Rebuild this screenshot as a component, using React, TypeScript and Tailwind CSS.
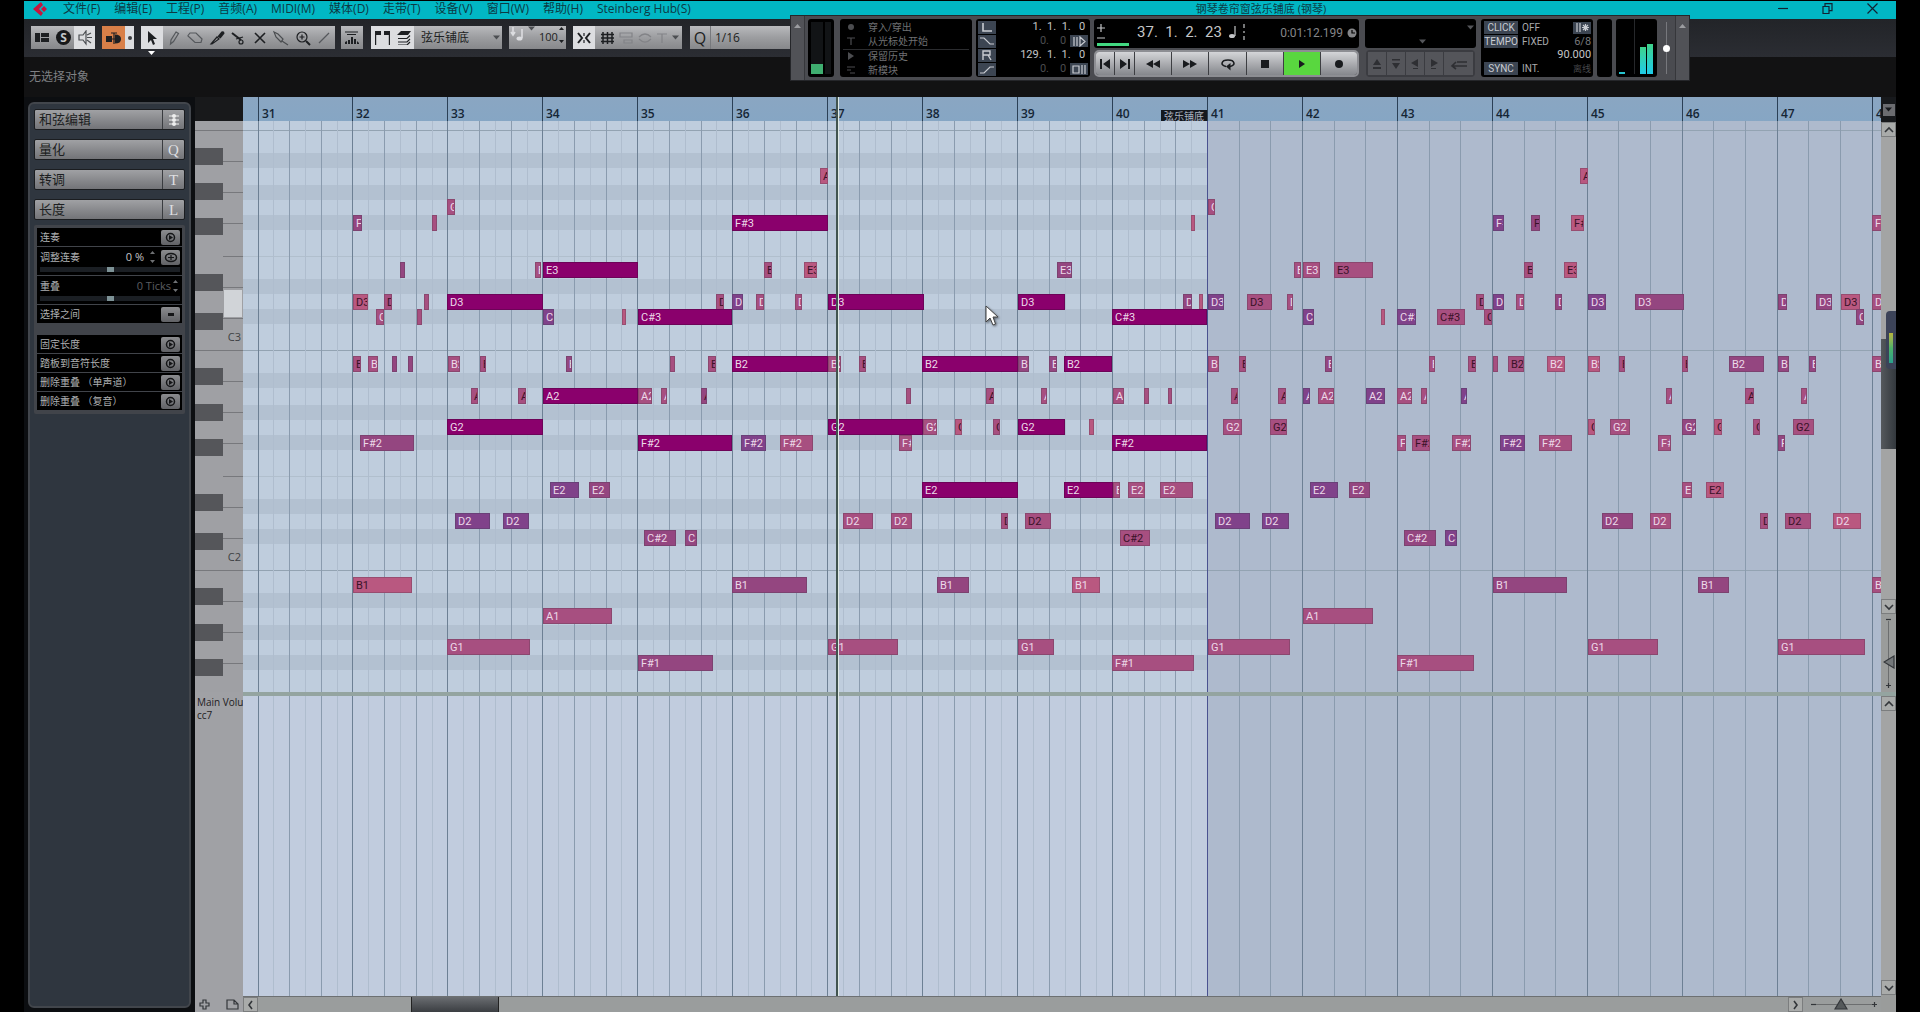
import React from "react";
import clsx from "clsx";

const CJK = "font-['Open_Sans','Noto_Sans_CJK_SC',sans-serif]";

/* ---------- shared helpers ---------- */

function Icon({ w = 16, h = 16, children, className }: { w?: number; h?: number; children: React.ReactNode; className?: string }) {
  return (
    <svg width={w} height={h} viewBox={`0 0 ${w} ${h}`} fill="none" stroke="currentColor" strokeWidth={1.2} className={clsx("shrink-0", className)} aria-hidden="true">
      {children}
    </svg>
  );
}

const solid = { fill: "currentColor", stroke: "none" };

/* ---------- title bar ---------- */

const menus = ["文件(F)", "编辑(E)", "工程(P)", "音频(A)", "MIDI(M)", "媒体(D)", "走带(T)", "设备(V)", "窗口(W)", "帮助(H)", "Steinberg Hub(S)"];

function TitleBar() {
  return (
    <header className="relative flex h-[18px] shrink-0 items-center bg-[#01b7c4] pb-0.5 text-[12px] leading-4 text-[#0c3a44]">
      <Icon w={16} h={14} className="ml-2 text-[#c8143c]">
        <path {...solid} d="M1 7 9 0l2 3-4 4 4 4-2 3zM9 7l3-3 3 3-3 3z" />
      </Icon>
      <nav className="ml-[15px] flex gap-[14px]">
        {menus.map((m) => (
          <button key={m} className="whitespace-nowrap">{m}</button>
        ))}
      </nav>
      <h1 className="absolute left-[62.6%] whitespace-nowrap text-[11px]">钢琴卷帘窗弦乐铺底 (钢琴)</h1>
      <div className="ml-auto flex items-center gap-[34px] pr-[18px] pb-0.5 text-[#123]">
        <button aria-label="最小化"><Icon w={10} h={10}><path d="M0 5.500h10" /></Icon></button>
        <button aria-label="还原"><Icon w={11} h={11}><path d="M1 3.500h6v7H1zM3 3V.6h7v7H7.500" /></Icon></button>
        <button aria-label="关闭"><Icon w={11} h={11}><path d="m.5.5 10 10m0-10-10 10" /></Icon></button>
      </div>
    </header>
  );
}

/* ---------- toolbar ---------- */

function Group({ className, children }: { className?: string; children: React.ReactNode }) {
  return (
    <div className={clsx("flex h-[23px] shrink-0 items-stretch bg-linear-to-b from-[#b9babd] via-[#9c9da0] to-[#87888b] text-[#1d1f22]", className)}>
      {children}
    </div>
  );
}

function Tool({ label, active, className, children }: { label: string; active?: boolean; className?: string; children: React.ReactNode }) {
  return (
    <button aria-label={label} className={clsx("flex items-center justify-center", active && "bg-[#dcdde0]", className)}>
      {children}
    </button>
  );
}

const drawTools: { label: string; icon: React.ReactNode }[] = [
  { label: "铅笔", icon: <path d="m4.500 14 .5-4 5-8 2.500 1.500-5 8zM10 2l2.500 1.500" stroke="#55585c" /> },
  { label: "橡皮", icon: <path d="M1 5.500 3 3h6l6 6-1 3.500H8L1 6z" stroke="#55585c" /> },
  { label: "修剪", icon: <><path d="M2 14 8 7l2 2-7 5z" /><path {...solid} d="m8.500 6.500 4-5q3-1 3 2l-4 5z" /></> },
  { label: "剪刀", icon: <><path d="m2 3 9 7" strokeWidth={2} /><path d="M13 7 6 9" /><circle cx="11" cy="12" r="2" /></> },
  { label: "静音", icon: <path d="m3 3 10 10M13 3 3 13" strokeWidth={1.600} /> },
  { label: "胶水", icon: <path d="m1 2 4 2 5 5-2 3-5-5zM9 11l6 4" stroke="#4a4d50" /> },
  { label: "缩放", icon: <><circle cx="7" cy="7" r="5" /><path d="M4.500 7h5M7 4.500v5" /><path d="m11 11 4 4" strokeWidth={2} /></> },
  { label: "画线", icon: <path d="M3 13 13 3" stroke="#55585c" /> },
];

function Caret({ className }: { className?: string }) {
  return <Icon w={7} h={5} className={className}><path {...solid} d="M0 .5h7L3.500 4.500z" /></Icon>;
}

function Toolbar() {
  return (
    <div className="flex h-[38px] shrink-0 items-start bg-linear-to-b from-[#222428] to-[#2b2d33] pt-[7px] pl-[7px]">
      <Group className="w-16">
        <Tool label="窗口布局" className="w-[22px]"><Icon w={14} h={10}><path {...solid} d="M0 0h5v9H0zM6 0h8v4H6zM6 5h8v4H6z" /></Icon></Tool>
        <Tool label="独奏" className="w-[21px]"><span className="flex size-[15px] items-center justify-center rounded-full bg-[#17181a] text-[12px] font-bold leading-none text-[#c5c6c8]">S</span></Tool>
        <Tool label="监听" active className="flex-1"><Icon><path d="M2 5h4l3-4v13L6 10H2zM10 5l4-2M10 7.500h5M10 10l4 3" stroke="#4b4e52" /></Icon></Tool>
      </Group>
      <Group className="ml-[7px] w-8">
        <Tool label="自动滚动" className="w-[23px] bg-[#d87f48]"><Icon w={18} h={14}><path {...solid} d="M1 5h6v6H1zM10 3.500q6 0 6 4.500t-6 4.500z" /><path d="M6 2h6M9 2v11M7 8h5" /></Icon></Tool>
        <Tool label="滚动设置" active className="flex-1"><span className="size-1 rounded-full bg-[#3b3d40]" /></Tool>
      </Group>
      <Group className="ml-[7px] w-[194px]">
        <div className="relative flex w-[22px]">
          <Tool label="对象选择" active className="flex-1"><Icon w={12} h={16}><path {...solid} d="M2 1v12l3-3 2 5 2-1-2-5h4z" /></Icon></Tool>
          <Icon w={7} h={4} className="absolute top-[25px] left-[7px] text-white"><path {...solid} d="M0 0h7L3.500 4z" /></Icon>
        </div>
        {drawTools.map((t) => <Tool key={t.label} label={t.label} className="flex-1"><Icon>{t.icon}</Icon></Tool>)}
      </Group>
      <Group className="ml-1.5 w-[22px]">
        <Tool label="显示力度" className="flex-1"><Icon><path d="M1 2h13M3 4.500h9" /><path {...solid} d="M1 14v-2l2-1v3zM4 14v-4h2v4zM7 14V7h2v7zM10 14v-5h2v5zM13 14v-3l2 2v1z" /></Icon></Tool>
      </Group>
      <Group className="ml-2 w-[131px]">
        <Tool label="显示片段边界" active className="w-[22px]"><Icon w={15} h={14}><path {...solid} d="M0 0h6v4H0zM9 0h6v4H9z" /><path d="M.6 0v14M14.400 0v14" /></Icon></Tool>
        <Tool label="仅编辑当前片段" active className="w-[21px]"><Icon w={14} h={14}><path {...solid} d="M4 0h10l-3 4H0z" /><path d="m1 7.500h9l3-3M1 11h9l3-3M1 14h9l3-3" /></Icon></Tool>
        <div className="relative flex flex-1 items-center">
          <select aria-label="当前片段" className="w-full appearance-none bg-transparent pl-[7px] text-[12px] outline-none"><option>弦乐铺底</option></select>
          <Caret className="pointer-events-none absolute right-0.5 text-[#4c4e52]" />
        </div>
      </Group>
      <Group className="ml-[7px] w-[57px] items-center">
        <Icon w={14} h={16} className="ml-px text-[#dcdde0]"><path d="M3 1v7M1 6l2 3 2-3M12 3v9" strokeWidth={1.600} /><ellipse {...solid} cx="9.500" cy="12.500" rx="3" ry="2" /></Icon>
        <Caret className="ml-1 text-[#4c4e52]" />
        <input aria-label="插入力度" defaultValue="100" className="ml-1 w-5 bg-transparent text-[11px] outline-none" />
        <Icon w={6} h={18}><path {...solid} d="M0 4h5L2.500 1zM0 14h5l-2.500 3z" /></Icon>
      </Group>
      <Group className="ml-[7px] w-[109px]">
        <Tool label="吸附" active className="w-[22px]"><Icon w={14} h={12}><path d="m1 1 4 5-4 5M13 1 9 6l4 5" strokeWidth={2} /><path d="M7 1v3M7 8v3" /></Icon></Tool>
        <Tool label="吸附类型" className="w-6"><Icon w={14} h={12}><path d="M1 2.500h13M1 6h13M1 9.500h13M3 0v12M7.500 0v12M12 0v12" strokeWidth={1.500} /></Icon></Tool>
        <div className="flex flex-1 items-center justify-between pr-[3px] text-[#828387]">
          <Icon w={14} h={12}><path d="M1 1h12v4H1zM5 8h8v3H5z" /></Icon>
          <Icon w={14} h={12}><path d="M1 5q6-6 12 0M13 7q-6 6-12 0" /></Icon>
          <Icon w={10} h={12}><path d="M0 2h10M5 2v9" /></Icon>
          <Caret className="text-[#4c4e52]" />
        </div>
      </Group>
      <Group className="ml-2 w-40">
        <Tool label="量化" className="w-[21px] border-r border-[#77797d] text-[16px]">Q</Tool>
        <select aria-label="量化预设" className="flex-1 appearance-none bg-transparent pl-1 text-[12px] outline-none"><option>1/16</option></select>
      </Group>
    </div>
  );
}

/* ---------- floating transport panel ---------- */

const screen = "rounded-[3px] bg-black";

function Glyph({ children }: { children: React.ReactNode }) {
  return <Icon w={14} h={11} className="text-[#c9ccd2]">{children}</Icon>;
}

function LocatorRow({ label, icon, value, dim, tail }: { label: string; icon: React.ReactNode; value: string; dim?: boolean; tail?: React.ReactNode }) {
  return (
    <div className="flex h-[14px] items-center">
      <button aria-label={label} className="flex h-[13px] w-[18px] items-center justify-center bg-[#3c4552]"><Glyph>{icon}</Glyph></button>
      <span className={clsx("ml-auto whitespace-pre font-['Roboto',sans-serif] text-[11px]", dim ? "text-[#4c4d50]" : "text-[#c4c5c7]")}>{value}</span>
      {tail ? <button aria-label={`${label}开关`} className="ml-1 flex h-3 w-[18px] items-center justify-center bg-[#3c4552]"><Glyph>{tail}</Glyph></button> : <span className="w-[3px]" />}
    </div>
  );
}

const transportButtons: { label: string; w: string; on?: boolean; icon: React.ReactNode }[] = [
  { label: "上一标记", w: "w-[18px]", icon: <path {...solid} d="M2 2h2v10H2zM12 2v10L5 7z" /> },
  { label: "下一标记", w: "w-[19px]", icon: <path {...solid} d="M2 2v10l7-5zM10 2h2v10h-2z" /> },
  { label: "快退", w: "flex-1", icon: <path {...solid} d="M7 3v8L0 7zM14 3v8L7 7z" /> },
  { label: "快进", w: "flex-1", icon: <path {...solid} d="M0 3v8l7-4zM7 3v8l7-4z" /> },
  { label: "循环", w: "flex-1", icon: <><path d="M5 9.500C-1 8.500 0 3 7 3s8 5.500 2 6.500" strokeWidth={1.600} /><path {...solid} d="M9.500 6v7.500L5 9.500z" /></> },
  { label: "停止", w: "flex-1", icon: <path {...solid} d="M3 3h8v8H3z" /> },
  { label: "播放", w: "flex-1", on: true, icon: <path {...solid} d="M4 3v8l6-4z" /> },
  { label: "录音", w: "flex-1", icon: <circle {...solid} cx="7" cy="7" r="4" /> },
];

const punchRows: { label: string; icon: React.ReactNode }[] = [
  { label: "穿入/穿出", icon: <circle {...solid} cx="5" cy="5" r="3" /> },
  { label: "从光标处开始", icon: <path d="M1 2h8M5 2v7" /> },
  { label: "保留历史", icon: <path {...solid} d="M2 1v8l6-4z" /> },
  { label: "新模块", icon: <path d="M1 2h8M1 5h4M4 8h5" /> },
];

function Tag({ children }: { children: React.ReactNode }) {
  return <span className="flex h-[13px] w-[34px] items-center justify-center bg-[#3c4552] text-[#c9ccd2]">{children}</span>;
}

function Transport() {
  return (
    <section aria-label="走带控制" className="absolute top-[15px] left-[41.150%] flex h-[66px] w-[900px] border border-[#25262a] bg-[#4a4b50] py-[3px]">
      <button aria-label="折叠左侧" className="-my-[3px] flex w-[14px] justify-center border-r border-[#36373b] bg-[#515257] pt-2 text-[#9b9ca0]">
        <Icon w={7} h={4}><path {...solid} d="M0 4h7L3.500 0z" /></Icon>
      </button>
      <div className={clsx(screen, "ml-[3px] flex w-[26px] items-end gap-0.5 p-[3px]")}>
        <div className="flex h-full w-3 items-end bg-[#121416]"><div className="h-[10px] w-full bg-[#3fae70]" /></div>
        <div className="h-full flex-1 bg-[#121416]" />
      </div>
      <div className={clsx(screen, "ml-1.5 flex w-[132px] flex-col justify-between px-[3px] pt-px text-[10px] leading-[14px] text-[#6f7073]")}>
        {punchRows.map((r, i) => (
          <button key={r.label} className={clsx("flex h-[14px] items-center", i === 2 && "border-t border-[#2b2c2f]")}>
            <Icon w={10} h={10} className="ml-[3px] text-[#4c4d50]">{r.icon}</Icon>
            <span className="ml-3">{r.label}</span>
          </button>
        ))}
      </div>
      <div className={clsx(screen, "ml-1 flex w-[114px] flex-col justify-between px-0.5 py-px")}>
        <LocatorRow label="左定位" icon={<path d="M3 1v8h9" strokeWidth={1.600} />} value="1.  1.  1.   0" />
        <LocatorRow label="穿入" icon={<path d="M0 2h4l6 6h4" />} value="0.    0" dim tail={<path d="M2 1v9M5 1v9M8 1l5 4.500L8 10z" />} />
        <LocatorRow label="右定位" icon={<path d="M3 10V1h7v4H3m5 0 3 5" strokeWidth={1.400} />} value="129.  1.  1.   0" />
        <LocatorRow label="穿出" icon={<path d="M0 9h4l6-6h4" />} value="0.    0" dim tail={<path d="M1 2h6v7H1zM10 1v9M13 1v9" />} />
      </div>
      <div className="ml-1 flex w-[265px] flex-col justify-between">
        <div className={clsx(screen, "flex h-[29px] items-center text-[#c4c5c7]")}>
          <div className="ml-[3px] w-8">
            <Icon w={32} h={26}><path d="M0 7h8M4 3v8M0 17h8" /><path d="M0 22h32v3H0z" fill="#42d982" stroke="none" /></Icon>
          </div>
          <span className="ml-2 pb-1 whitespace-pre font-['Roboto',sans-serif] text-[15px] leading-5">37.  1.  2.  23</span>
          <Icon w={20} h={18} className="mb-1 ml-1.5"><ellipse {...solid} cx="4" cy="13" rx="3" ry="2" /><path d="M7 13V3M16 1v4M16 8v2M16 13v4" /></Icon>
          <time className="ml-auto pb-0.5 font-['Roboto',sans-serif] text-[12px] leading-4 text-[#858689]">0:01:12.199</time>
          <Icon w={10} h={10} className="mr-0.5 mb-0.5 ml-1 text-[#858689]"><circle {...solid} cx="5" cy="5" r="4.500" /><path d="M5 2v3h3" stroke="#000" /></Icon>
        </div>
        <div className="flex h-[27px] gap-px overflow-hidden rounded-[5px] border-2 border-[#8d8e93] bg-[#3d3e42] text-[#191b1e]">
          {transportButtons.map((b) => (
            <button key={b.label} aria-label={b.label} className={clsx("flex items-center justify-center", b.w, b.on ? "bg-[#59d73f]" : "bg-linear-to-b from-[#d4d5d8] to-[#85878c]")}>
              <Icon w={14} h={14}>{b.icon}</Icon>
            </button>
          ))}
        </div>
      </div>
      <div className="ml-1.5 flex w-[111px] flex-col justify-between">
        <div className={clsx(screen, "relative h-[29px] text-[#55565a]")}>
          <Caret className="absolute top-1.5 right-0.5" />
          <Caret className="absolute bottom-1 left-[54px]" />
        </div>
        <div className="mx-px flex h-[27px] gap-px rounded-[4px] border-2 border-[#3b3c41] bg-[#3b3c41] text-[#2e2f33]">
          {[
            <path key="a" {...solid} d="M3 8h8L7 2zM3 10h8v2H3z" />,
            <path key="b" {...solid} d="M3 2h8v1.500H3zM3 6h8l-4 6z" />,
            <path key="c" {...solid} d="M3 6l7-4v8zM5 11h5v1H5z" />,
            <path key="d" {...solid} d="M11 6 4 2v8zM4 11h5v1H4z" />,
          ].map((p, i) => (
            <button key={i} aria-label={`编排 ${i + 1}`} className="flex w-[18px] items-center justify-center bg-[#54555a]"><Icon w={14} h={14}>{p}</Icon></button>
          ))}
          <button aria-label="返回" className="flex flex-1 items-center justify-center bg-[#54555a]"><Icon w={20} h={14}><path d="M8 5h10M3 9h15M7 5 3 9l4 3" strokeWidth={1.600} /></Icon></button>
        </div>
      </div>
      <div className={clsx(screen, "ml-[5px] flex w-[112px] flex-col justify-between py-0.5 pr-0.5 pl-[3px] font-['Roboto','Noto_Sans_CJK_SC',sans-serif] text-[10px] leading-3 text-[#a8a9ac]")}>
        <div className="flex items-center gap-1"><Tag>CLICK</Tag>OFF<span className="ml-auto flex h-3 w-[18px] items-center justify-center bg-[#3c4552]"><Glyph><path d="M2 1v9M5 1v9M7 5.500h7M8 3l5 5M8 8l5-5M10.500 2v7" /></Glyph></span></div>
        <div className="flex items-center gap-1"><Tag>TEMPO</Tag>FIXED<span className="ml-auto text-[11px] text-[#77787b]">6/8</span></div>
        <div className="text-right text-[11px] leading-3 text-[#c4c5c7]">90.000</div>
        <div className="flex items-center gap-1"><Tag>SYNC</Tag>INT.<span className="ml-auto text-[9px] text-[#47484b]">离线</span></div>
      </div>
      <div className={clsx(screen, "ml-1 w-[15px]")} />
      <div className={clsx(screen, "ml-1 flex w-[41px] items-end gap-px px-[3px] pb-[3px]")}>
        <span className="h-0.5 w-1.5 bg-[#27c4cf]" />
        <span className="mr-1 ml-2 h-full w-px bg-[#26282b]" />
        <span className="h-[27px] w-1.5 bg-linear-to-b from-[#3fd28a] to-[#1fcbe8]" />
        <span className="h-[30px] w-1.5 bg-linear-to-b from-[#3fd28a] to-[#1fcbe8]" />
      </div>
      <div className="flex w-[18px] justify-center py-[3px]">
        <div className="flex h-full w-px items-center justify-center bg-[#77787d]"><span className="size-[7px] shrink-0 rounded-full bg-white" /></div>
      </div>
      <button aria-label="折叠右侧" className="-my-[3px] flex flex-1 justify-center border-l border-[#36373b] bg-[#515257] pt-2 text-[#9b9ca0]">
        <Icon w={7} h={4}><path {...solid} d="M0 4h7L3.500 0z" /></Icon>
      </button>
    </section>
  );
}

/* ---------- inspector ---------- */

function Section({ title, mark }: { title: string; mark: React.ReactNode }) {
  return (
    <button className="flex h-[21px] w-full items-stretch rounded-[2px] border border-[#1b1d20] bg-linear-to-b from-[#a0a1a4] to-[#737478] text-left text-[13px] leading-[18px] text-[#1c1e21]">
      <span className="flex-1 pl-1">{title}</span>
      <span className="flex w-[22px] items-center justify-center border-l border-[#3a3c40] font-['Liberation_Serif',serif] text-[15px] text-[#dedfe1]">{mark}</span>
    </button>
  );
}

function GoButton({ label, kind = "go" }: { label: string; kind?: "go" | "oval" | "menu" }) {
  return (
    <button aria-label={label} className="flex h-[15px] w-[19px] shrink-0 items-center justify-center rounded-[2px] bg-linear-to-b from-[#8b8c8f] to-[#616266] text-[#141517]">
      {kind === "go" && <Icon w={11} h={11}><circle cx="5.500" cy="5.500" r="4" strokeWidth={1.500} /><path {...solid} d="M4 3v5l4-2.500z" /></Icon>}
      {kind === "oval" && <Icon w={14} h={11}><ellipse cx="7" cy="5.500" rx="5.500" ry="4" strokeWidth={1.500} /><path d="M4 5.500h6M7 3v5" /></Icon>}
      {kind === "menu" && <span className="h-[3px] w-1.5 bg-[#141517]" />}
    </button>
  );
}

function Param({ label, kind }: { label: string; kind?: "go" | "menu" }) {
  return (
    <div className="flex h-[18px] items-center justify-between bg-black pr-0.5 pl-[3px]">
      <span>{label}</span>
      <GoButton label={label} kind={kind} />
    </div>
  );
}

function SliderParam({ id, label, value, dim, children }: { id: string; label: string; value: string; dim?: boolean; children?: React.ReactNode }) {
  return (
    <div className="h-7 bg-black pr-0.5 pl-[3px]">
      <div className="flex h-5 items-center">
        <label htmlFor={id} className="flex-1">{label}</label>
        <span className={clsx("text-[11px]", dim ? "text-[#5b5d60]" : "text-[#c3c4c6]")}>{value}</span>
        <Icon w={5} h={14} className={clsx("text-[#6f7174]", children ? "mx-1.5" : "mr-0.5 ml-0.5")}><path {...solid} d="M0 4h5L2.500 1zM0 10h5l-2.500 3z" /></Icon>
        {children}
      </div>
      <input
        id={id}
        type="range"
        defaultValue={50}
        className="block h-[5px] w-full appearance-none bg-[#1b1f24] [&::-webkit-slider-thumb]:h-[5px] [&::-webkit-slider-thumb]:w-[7px] [&::-webkit-slider-thumb]:appearance-none [&::-webkit-slider-thumb]:bg-[#7d9296]"
      />
    </div>
  );
}

function Inspector() {
  return (
    <aside className="mt-[5px] mb-1 ml-1 flex w-[163px] shrink-0 flex-col rounded-[6px] border-2 border-[#42464c] bg-[#2f363f] px-1 pt-[5px]">
      <div className="flex flex-col gap-[9px]">
        <Section title="和弦编辑" mark={<Icon w={12} h={13} className="text-[#eee]"><path d="M1 3h10M1 7h10M1 11h10" /><circle {...solid} cx="6" cy="3" r="2" /><circle {...solid} cx="6" cy="7" r="2" /><circle {...solid} cx="6" cy="11" r="2" /></Icon>} />
        <Section title="量化" mark="Q" />
        <Section title="转调" mark="T" />
        <Section title="长度" mark="L" />
      </div>
      <div className="mt-[5px] flex flex-col gap-px rounded-[2px] bg-[#41444a] p-[3px] pb-1 text-[10px] leading-3 text-[#aeb0b2]">
        <Param label="连奏" />
        <SliderParam id="legato" label="调整连奏" value="0 %"><GoButton label="连奏模式" kind="oval" /></SliderParam>
        <SliderParam id="overlap" label="重叠" value="0 Ticks" dim />
        <Param label="选择之间" kind="menu" />
        <div className="h-[10px]" />
        <Param label="固定长度" />
        <Param label="踏板到音符长度" />
        <Param label="删除重叠 （单声道）" />
        <Param label="删除重叠 （复音）" />
      </div>
    </aside>
  );
}

/* ---------- keyboard ---------- */

const blackKeys = [27, 62, 97, 153, 192, 247, 283, 318, 373, 412, 467, 503, 538];
const whiteLines = [40, 71, 102, 135, 166, 197, 260, 291, 322, 355, 386, 417, 480, 511, 542];
const OCTAVES = [9, 229, 449];

function Keyboard() {
  return (
    <div className="relative h-[571px] shrink-0 overflow-hidden bg-[#9fa0a4]">
      {whiteLines.map((y) => <div key={y} className="absolute right-0 h-px w-5 bg-[#77787c]" style={{ top: y }} />)}
      {OCTAVES.map((y) => <div key={y} className="absolute inset-x-0 h-px bg-[#77787c]" style={{ top: y }} />)}
      {blackKeys.map((y) => <div key={y} className="absolute left-0 h-[17px] w-7 bg-[#55565a]" style={{ top: y }} />)}
      <div className="absolute top-[169px] right-px h-[27px] w-[18px] bg-[#d1d4d8]" />
      <span className="absolute top-[208px] right-0.5 text-[11px] leading-4 text-[#3e4043]">C3</span>
      <span className="absolute top-[428px] right-0.5 text-[11px] leading-4 text-[#3e4043]">C2</span>
    </div>
  );
}

/* ---------- note canvas ---------- */

type Tone = "S" | "v" | "m" | "r" | "k";
type Note = [from: number, to: number, tone: Tone, dark?: 1];

const toneClass: Record<Tone, string> = {
  S: "bg-[#8a006c] border-[#6d0358]",
  v: "bg-[#80428a] border-[#6a4078]",
  m: "bg-[#944680] border-[#7c4270]",
  r: "bg-[#a74f80] border-[#8b476f]",
  k: "bg-[#b95880] border-[#984d70]",
};

const rowTop: Record<string, number> = {
  A3: 47, G3: 78, "F#3": 94, E3: 141, D3: 173, "C#3": 188,
  B2: 235, A2: 267, G2: 298, "F#2": 314, E2: 361, D2: 392, "C#2": 409,
  B1: 456, A1: 487, G1: 518, "F#1": 534,
};

const notes: Record<string, Note[]> = {
  A3: [[577, 585, "k", 1], [1337, 1345, "k", 1]],
  G3: [[204, 212, "r"], [965, 972, "r"]],
  "F#3": [[110, 119, "m"], [189, 194, "r"], [489, 585, "S"], [948, 952, "k"], [1250, 1261, "v"], [1288, 1297, "m", 1], [1328, 1341, "k", 1], [1629, 1645, "r"]],
  E3: [[157, 162, "m"], [292, 298, "r"], [300, 395, "S"], [521, 529, "r", 1], [561, 574, "k", 1], [814, 829, "m"], [1051, 1058, "r"], [1060, 1077, "r"], [1091, 1130, "r", 1], [1281, 1290, "r", 1], [1321, 1334, "k", 1]],
  D3: [[110, 125, "k", 1], [141, 149, "r", 1], [181, 186, "r"], [204, 300, "S"], [473, 481, "r", 1], [489, 500, "v"], [513, 521, "r"], [552, 559, "r"], [585, 681, "S"], [775, 822, "S"], [940, 949, "m"], [956, 960, "k"], [965, 981, "v"], [1004, 1029, "r", 1], [1044, 1050, "r"], [1233, 1241, "r", 1], [1250, 1261, "v"], [1273, 1281, "r"], [1312, 1319, "m"], [1345, 1363, "v"], [1392, 1441, "m"], [1535, 1544, "m"], [1573, 1589, "m"], [1598, 1617, "k", 1], [1629, 1645, "r"]],
  "C#3": [[133, 141, "r"], [174, 179, "r"], [300, 311, "v"], [379, 383, "k"], [395, 489, "S"], [869, 964, "S"], [1060, 1071, "v"], [1138, 1142, "k"], [1154, 1173, "v"], [1194, 1222, "r", 1], [1241, 1249, "r", 1], [1613, 1621, "m"]],
  B2: [[110, 118, "r", 1], [125, 135, "r"], [149, 154, "m"], [165, 170, "m"], [205, 217, "r"], [237, 243, "r", 1], [323, 329, "m"], [427, 432, "r"], [465, 473, "r", 1], [489, 585, "S"], [585, 598, "r"], [616, 623, "r", 1], [679, 775, "S"], [775, 786, "m"], [806, 814, "m"], [821, 869, "S"], [965, 976, "r"], [996, 1003, "r", 1], [1082, 1089, "m"], [1186, 1192, "r"], [1225, 1233, "r", 1], [1250, 1255, "r"], [1265, 1281, "r", 1], [1304, 1322, "k"], [1345, 1357, "k"], [1376, 1382, "r", 1], [1439, 1445, "r", 1], [1486, 1521, "m"], [1535, 1546, "m"], [1566, 1573, "m"], [1629, 1645, "r"]],
  A2: [[228, 235, "r", 1], [275, 283, "r", 1], [300, 395, "S"], [395, 409, "r"], [418, 424, "r"], [458, 464, "m", 1], [663, 668, "r"], [743, 751, "r", 1], [798, 804, "r"], [870, 881, "r"], [901, 906, "r"], [925, 929, "r"], [988, 995, "r", 1], [1035, 1043, "r", 1], [1060, 1067, "v"], [1075, 1091, "r"], [1123, 1142, "v"], [1154, 1169, "r"], [1178, 1184, "r"], [1218, 1224, "v"], [1423, 1429, "r"], [1502, 1511, "r", 1], [1558, 1564, "r"]],
  G2: [[204, 300, "S"], [585, 680, "S"], [680, 694, "r"], [712, 719, "k", 1], [750, 757, "r", 1], [775, 822, "S"], [846, 851, "k"], [980, 999, "r"], [1027, 1044, "r", 1], [1345, 1352, "k", 1], [1367, 1387, "r"], [1439, 1453, "m"], [1471, 1479, "k", 1], [1510, 1517, "r", 1], [1550, 1571, "r", 1]],
  "F#2": [[117, 171, "m"], [395, 489, "S"], [498, 523, "v"], [537, 570, "r"], [656, 669, "r"], [869, 964, "S"], [1154, 1163, "r"], [1169, 1187, "r", 1], [1209, 1228, "r"], [1257, 1282, "v"], [1296, 1329, "r"], [1415, 1428, "r"], [1535, 1542, "m"]],
  E2: [[307, 336, "v"], [346, 367, "m"], [679, 775, "S"], [821, 870, "S"], [870, 877, "r"], [885, 902, "r"], [917, 950, "r"], [1067, 1095, "v"], [1106, 1127, "m"], [1439, 1449, "r"], [1463, 1481, "k", 1]],
  D2: [[212, 247, "v"], [260, 286, "v"], [600, 630, "r"], [648, 669, "r"], [758, 765, "r", 1], [782, 808, "r", 1], [972, 1007, "v"], [1019, 1046, "v"], [1359, 1390, "m"], [1407, 1428, "r"], [1517, 1525, "r", 1], [1542, 1568, "r", 1], [1590, 1618, "k"]],
  "C#2": [[401, 433, "m"], [442, 454, "m"], [877, 907, "r", 1], [1161, 1193, "m"], [1202, 1214, "v"]],
  B1: [[110, 169, "k", 1], [489, 564, "m"], [694, 726, "m"], [829, 857, "k"], [1250, 1324, "m"], [1455, 1486, "m"], [1629, 1645, "r"]],
  A1: [[300, 369, "r"], [1060, 1130, "r"]],
  G1: [[204, 287, "r"], [585, 655, "r"], [775, 811, "r"], [965, 1047, "r"], [1345, 1415, "r"], [1535, 1622, "r"]],
  "F#1": [[395, 470, "m"], [869, 951, "r"], [1154, 1231, "r"]],
};

const BAR = 94.95;
const PART_END = 964;
const bars = Array.from({ length: 18 }, (_, i) => ({ n: 31 + i, x: Math.floor(15 + i * BAR) }));
const thirds = bars.flatMap((_, i) => [1, 2].map((k) => Math.floor(15 + (i + k / 3) * BAR)));
const sixths = bars.slice(0, 10).flatMap((_, i) => [1, 3, 5].map((k) => Math.floor(15 + (i + k / 6) * BAR)));
const blackRows = OCTAVES.flatMap((o) => [23, 55, 85, 149, 179].map((d) => o + d));

function GridLines() {
  return (
    <>
      {sixths.map((x) => <div key={x} className="absolute inset-y-0 w-px bg-[#afbdce]" style={{ left: x }} />)}
      {thirds.map((x) => <div key={x} className="absolute inset-y-0 w-px bg-[#8a9bae]" style={{ left: x }} />)}
      {bars.map((b) => <div key={b.n} className="absolute inset-y-0 w-px bg-[#6d8094]" style={{ left: b.x }} />)}
      <div className="absolute inset-y-0 w-px bg-[#4a5290]" style={{ left: PART_END }} />
    </>
  );
}

function NoteCanvas() {
  return (
    <div className="relative h-[571px] shrink-0 overflow-hidden bg-[#bfcddd]">
      {blackRows.map((y) => <div key={y} className="absolute inset-x-0 h-[15px] bg-[#b3c1d1]" style={{ top: y }} />)}
      <div className="absolute inset-y-0 right-0 bg-[#aebacd]" style={{ left: PART_END }} />
      {OCTAVES.map((y) => <div key={y} className="absolute inset-x-0 h-px bg-[#93a3b2]" style={{ top: y }} />)}
      {[135, 355].map((y) => <div key={y} className="absolute left-0 h-px w-[964px] bg-[#b1bfcd]" style={{ top: y }} />)}
      <GridLines />
      {Object.entries(notes).flatMap(([pitch, list]) =>
        list.map(([from, to, tone, dark]) => (
          <div
            key={`${pitch}-${from}`}
            className={clsx("absolute flex h-4 items-center overflow-hidden border pl-0.5 font-['Roboto',sans-serif] text-[11px] leading-none", toneClass[tone], dark ? "text-[#3a1228]" : "text-[#ecd9e8]")}
            style={{ left: from, top: rowTop[pitch], width: to - from }}
          >
            {to - from > 5 && pitch}
          </div>
        )),
      )}
    </div>
  );
}

function Ruler() {
  return (
    <div className="relative h-6 shrink-0 overflow-hidden bg-linear-to-b from-[#8aa6c2] to-[#86a6c4]">
      {bars.map((b) => (
        <div key={b.n} className="absolute inset-y-0 border-l border-[#2b4056] pt-[9px] pl-[3px] text-[12px] leading-4 font-semibold text-[#152535]" style={{ left: b.x }}>
          {b.n}
        </div>
      ))}
      <div className="absolute bottom-0 left-[918px] h-[11px] w-[46px] overflow-hidden bg-[#14181e] text-center text-[10px] leading-[12px] text-[#aab4c0]">弦乐铺底</div>
    </div>
  );
}

/* ---------- scroll bars ---------- */

const arrows = { up: "M2 7l4-4 4 4", down: "M2 3l4 4 4-4", left: "M7 1 4 5l3 4", right: "M4 1l3 4-3 4" };

function ScrollButton({ dir }: { dir: keyof typeof arrows }) {
  return (
    <button aria-label={dir} className="flex size-[15px] shrink-0 items-center justify-center border border-[#7b7d7e] bg-[#a9abaa] text-[#33363a]">
      <Icon w={12} h={10}><path d={arrows[dir]} strokeWidth={1.600} /></Icon>
    </button>
  );
}

function RightRail() {
  return (
    <div className="relative flex w-[15px] shrink-0 flex-col bg-[#9a9c9b]">
      <div className="flex h-[25px] shrink-0 items-center justify-center bg-[#17191c]">
        <button aria-label="标尺选项" className="flex size-3 items-center justify-center bg-[#6b6c70] text-[#17191c]"><Caret /></button>
      </div>
      <ScrollButton dir="up" />
      <div className="relative h-[462px] shrink-0 bg-[#a3a4a4]">
        <div className="absolute top-[202px] h-[110px] w-full bg-linear-to-r from-[#55595d] to-[#33383d]" />
      </div>
      <ScrollButton dir="down" />
      <div className="flex h-[78px] shrink-0 flex-col items-center justify-between py-1 text-[#33363a]">
        <Icon w={5} h={3}><path d="M0 1.500h5" /></Icon>
        <div className="relative w-px flex-1 bg-[#6c6e6f]">
          <Icon w={12} h={14} className="absolute top-[34px] -left-[5px]"><path d="M11 1v12L1 7z" fill="#74787a" /></Icon>
        </div>
        <Icon w={5} h={5}><path d="M0 2.500h5M2.500 0v5" /></Icon>
      </div>
      <div className="h-1 shrink-0 bg-[#94a4a0]" />
      <ScrollButton dir="up" />
      <div className="flex-1 bg-[#a3a4a4]" />
      <ScrollButton dir="down" />
      <div className="h-[17px] shrink-0" />
      <div className="absolute top-[214px] right-0 flex h-[58px] w-[10px] items-end justify-center rounded-l-[4px] bg-[#3c4358] pb-1.5">
        <div className="h-[30px] w-1 bg-linear-to-b from-[#b6b43e] via-[#4cb368] to-[#2a9f8c]" />
      </div>
    </div>
  );
}

function BottomBar() {
  return (
    <div className="flex h-4 shrink-0 items-center border-t border-[#6d7072] bg-[#9a9d9d]">
      <ScrollButton dir="left" />
      <div className="relative h-full flex-1">
        <div className="absolute left-[10%] h-full w-[5.750%] border-x border-[#222] bg-linear-to-b from-[#6b6e72] to-[#3b3e42]" />
      </div>
      <ScrollButton dir="right" />
      <div className="flex w-[78px] items-center justify-between pr-1 pl-2 text-[#33363a]">
        <Icon w={5} h={3}><path d="M0 1.500h5" /></Icon>
        <div className="relative h-px flex-1 bg-[#6c6e6f]">
          <Icon w={14} h={12} className="absolute -top-[6px] left-[18px]"><path d="M1 11h12L7 1z" fill="#55595b" /></Icon>
        </div>
        <Icon w={5} h={5}><path d="M0 2.500h5M2.500 0v5" /></Icon>
      </div>
    </div>
  );
}

/* ---------- page ---------- */

export default function App() {
  return (
    <div className={clsx("h-screen min-h-[800px] overflow-hidden bg-black px-6 pt-px", CJK)}>
      <div className="flex h-full flex-col bg-[#131314]">
        <TitleBar />
        <Toolbar />
        <p className="flex h-10 shrink-0 items-center bg-[#121213] pl-[5px] text-[12px] text-[#7f8083]">无选择对象</p>
        <main className="flex min-h-0 flex-1 bg-[#0c0e11]">
          <Inspector />
          <div className="ml-1 flex w-12 shrink-0 flex-col bg-[#a0a1a5]">
            <div className="h-6 shrink-0 bg-[#18191b]" />
            <Keyboard />
            <div className="h-1 shrink-0 bg-[#a0a1a5]" />
            <div className="flex-1 overflow-hidden pl-0.5 text-[10px] leading-[13px] whitespace-nowrap text-[#1e2023]">
              Main Volume<br />cc7
            </div>
            <div className="flex h-4 shrink-0 items-center justify-between px-1 text-[#33363a]">
              <button aria-label="添加控制轨"><Icon w={11} h={11}><path d="M4 1h3v3h3v3H7v3H4V7H1V4h3z" /></Icon></button>
              <button aria-label="控制轨预设"><Icon w={13} h={11}><path d="M1 1h7l4 4v5H1zM8 1v4h4" /></Icon></button>
            </div>
          </div>
          <div className="relative flex min-w-0 flex-1 flex-col">
            <Ruler />
            <NoteCanvas />
            <div className="h-1 shrink-0 bg-[#94a4a0]" />
            <div className="relative min-h-0 flex-1 overflow-hidden bg-[#c1ccde]">
              <div className="absolute inset-y-0 right-0 bg-[#aebacd]" style={{ left: PART_END }} />
              <GridLines />
            </div>
            <BottomBar />
            <div className="absolute top-0 bottom-4 left-[593px] w-[3px] border-r border-[#dfe9e4] bg-[#41544f]" />
            <svg width="14" height="22" viewBox="0 0 14 22" className="absolute top-[208px] left-[742px] drop-shadow-[1px_1px_1px_rgba(0,0,0,0.5)]" aria-hidden="true">
              <path d="M1 1v16l4-4 3 7 2.500-1L8 12h5z" fill="#fff" stroke="#444" />
            </svg>
          </div>
          <RightRail />
        </main>
      </div>
      <Transport />
    </div>
  );
}
